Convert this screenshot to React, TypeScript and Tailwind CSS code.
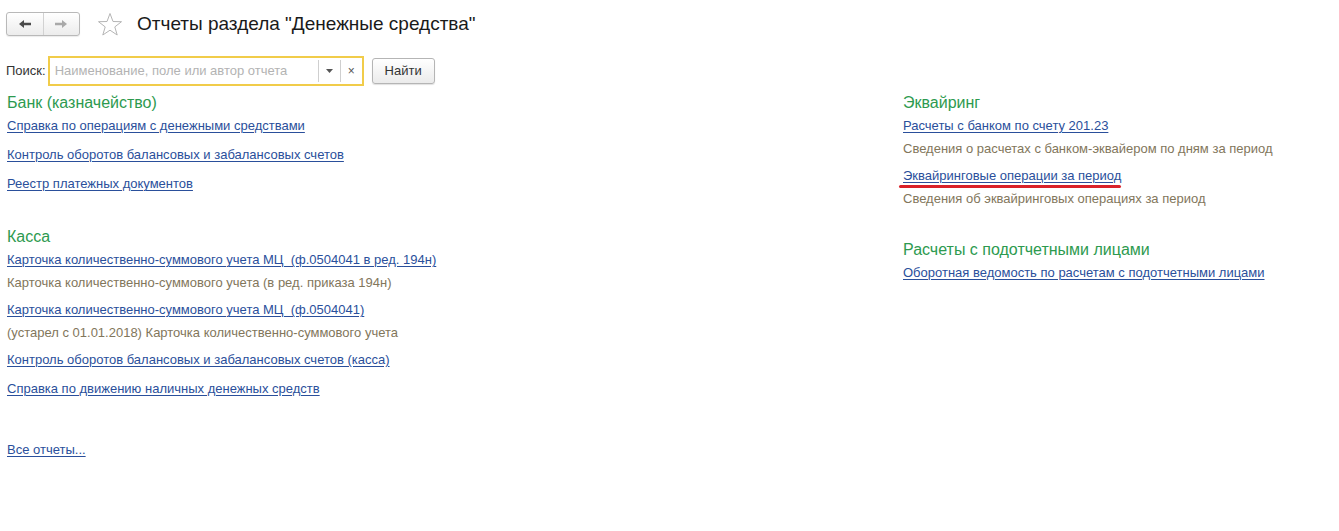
import React from "react";

const font = { fontFamily: '"Liberation Sans", Arial, sans-serif' };

function Heading({ children, mt = false }: { children: React.ReactNode; mt?: boolean }) {
  return (
    <div className={`h-[23px] text-[16px] leading-[16px] text-[#2d9a4f] whitespace-nowrap ${mt ? "mt-[24px]" : ""}`}>
      {children}
    </div>
  );
}

function Link({ children, withDesc = false }: { children: React.ReactNode; withDesc?: boolean }) {
  return (
    <div className={`${withDesc ? "h-[23px]" : "h-[29px]"} text-[13px] leading-[16px] whitespace-pre`}>
      <span className="text-[#2a4f9b] underline underline-offset-[2px] decoration-[1px] cursor-pointer">{children}</span>
    </div>
  );
}

function Desc({ children }: { children: React.ReactNode }) {
  return <div className="h-[27px] text-[13px] leading-[16px] text-[#82765b] whitespace-pre">{children}</div>;
}

export default function App() {
  return (
    <div className="w-[1339px] h-[531px] bg-white relative overflow-hidden" style={font}>
      {/* Header */}
      <div className="flex items-center h-[24px] mt-[12px] ml-[6px]">
        <div className="flex h-[24px] w-[74px] rounded-[3px] border border-[#b9b9b9] bg-gradient-to-b from-white to-[#ececec] shadow-[0_1px_1px_rgba(0,0,0,0.08)]">
          <div className="w-[37px] flex items-center justify-center border-r border-[#d2d2d2]">
            <svg width="14" height="10" viewBox="0 0 14 10">
              <path d="M1 5 L6 1 L6 3.8 L13 3.8 L13 6.2 L6 6.2 L6 9 Z" fill="#4a4a4a" />
            </svg>
          </div>
          <div className="w-[36px] flex items-center justify-center">
            <svg width="14" height="10" viewBox="0 0 14 10">
              <path d="M13 5 L8 1 L8 3.8 L1 3.8 L1 6.2 L8 6.2 L8 9 Z" fill="#a9a9a9" />
            </svg>
          </div>
        </div>
        <div className="ml-[17px] w-[26px] h-[24px] flex items-center justify-center">
          <svg width="26" height="24" viewBox="0 0 26 24">
            <path
              d="M13 1.5 L16 9.5 L24.5 9.7 L17.8 14.9 L20.2 23 L13 18.2 L5.8 23 L8.2 14.9 L1.5 9.7 L10 9.5 Z"
              fill="none"
              stroke="#b5b5b5"
              strokeWidth="1"
              strokeLinejoin="round"
            />
          </svg>
        </div>
        <div className="ml-[14px] text-[19px] leading-[22px] text-[#1a1a1a] whitespace-nowrap">
          Отчеты раздела "Денежные средства"
        </div>
      </div>

      {/* Search */}
      <div className="flex items-center mt-[20px] ml-[6px] h-[30px]">
        <div className="text-[13px] text-[#333] mr-[2px]">Поиск:</div>
        <div className="flex items-center w-[316px] h-[30px] border-2 border-[#f1cc4a] bg-white">
          <div className="flex-1 pl-[5px] text-[13px] text-[#b3b3b3] whitespace-nowrap">Наименование, поле или автор отчета</div>
          <div className="w-[22px] h-[22px] border-l border-[#cfcfcf] flex items-center justify-center">
            <svg width="7" height="4" viewBox="0 0 7 4">
              <path d="M0 0 L7 0 L3.5 4 Z" fill="#555" />
            </svg>
          </div>
          <div className="w-[22px] h-[22px] border-l border-[#cfcfcf] flex items-center justify-center text-[12px] leading-none text-[#555]">
            ×
          </div>
        </div>
        <div className="ml-[8px] w-[63px] h-[26px] rounded-[3px] border border-[#b5b5b5] bg-gradient-to-b from-white to-[#ebebeb] shadow-[0_1px_1px_rgba(0,0,0,0.12)] flex items-center justify-center text-[13px] text-[#333]">
          Найти
        </div>
      </div>

      {/* Content */}
      <div className="flex mt-[9px]">
        <div className="ml-[7px] w-[896px] flex flex-col">
          <Heading>Банк (казначейство)</Heading>
          <Link>Справка по операциям с денежными средствами</Link>
          <Link>Контроль оборотов балансовых и забалансовых счетов</Link>
          <Link>Реестр платежных документов</Link>

          <Heading mt>Касса</Heading>
          <Link withDesc>Карточка количественно-суммового учета МЦ  (ф.0504041 в ред. 194н)</Link>
          <Desc>Карточка количественно-суммового учета (в ред. приказа 194н)</Desc>
          <Link withDesc>Карточка количественно-суммового учета МЦ  (ф.0504041)</Link>
          <Desc>(устарел с 01.01.2018) Карточка количественно-суммового учета</Desc>
          <Link>Контроль оборотов балансовых и забалансовых счетов (касса)</Link>
          <Link>Справка по движению наличных денежных средств</Link>

          <div className="mt-[32px]">
            <Link>Все отчеты...</Link>
          </div>
        </div>

        <div className="flex flex-col">
          <Heading>Эквайринг</Heading>
          <Link withDesc>Расчеты с банком по счету 201.23</Link>
          <Desc>Сведения о расчетах с банком-эквайером по дням за период</Desc>
          <div className="relative">
            <Link withDesc>Эквайринговые операции за период</Link>
            <div className="absolute left-[-4px] top-[17px] w-[222px] h-[3px] rounded-full bg-[#d9222a]" />
          </div>
          <Desc>Сведения об эквайринговых операциях за период</Desc>

          <Heading mt>Расчеты с подотчетными лицами</Heading>
          <Link>Оборотная ведомость по расчетам с подотчетными лицами</Link>
        </div>
      </div>
    </div>
  );
}
